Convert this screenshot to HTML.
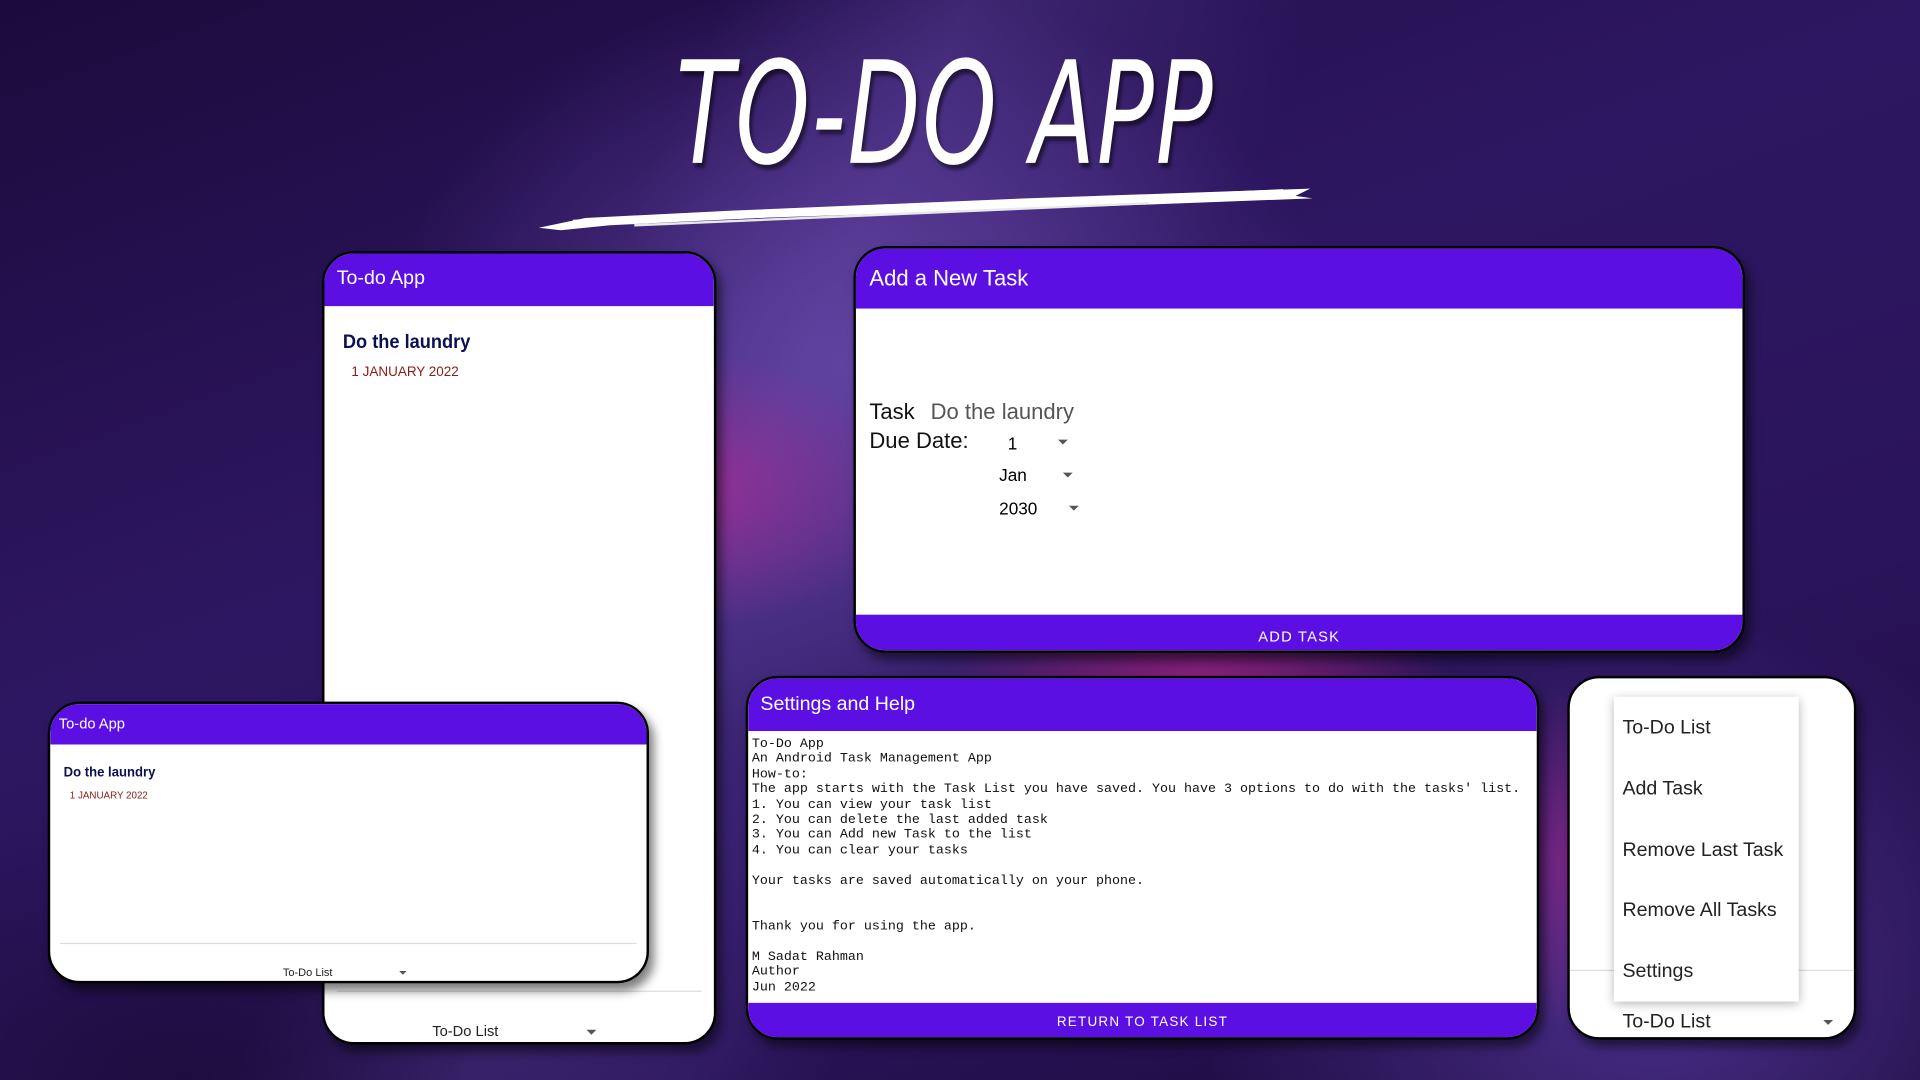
<!DOCTYPE html>
<html><head><meta charset="utf-8"><style>
*{margin:0;padding:0;box-sizing:border-box}
html,body{width:1920px;height:1080px;overflow:hidden;background:#1a0838}
#s{position:absolute;left:0;top:0;width:1568px;height:882px;transform:scale(1.22449);transform-origin:0 0;overflow:hidden;
background:
radial-gradient(ellipse 260px 160px at 560px 400px,rgba(200,40,150,.55),transparent 70%),
radial-gradient(ellipse 300px 120px at 980px 560px,rgba(210,40,140,.6),transparent 70%),
radial-gradient(ellipse 180px 200px at 1290px 700px,rgba(190,40,150,.45),transparent 70%),
linear-gradient(115deg,transparent 30%,rgba(110,80,180,.35) 40%,transparent 55%),
radial-gradient(ellipse 520px 420px at 700px 300px,#5a3c98,transparent 75%),
radial-gradient(ellipse 500px 400px at 1350px 800px,#4b2f8a,transparent 75%),
linear-gradient(160deg,#1c0a3c 0%,#2e1762 40%,#2a145a 70%,#1a0a3a 100%);
font-family:"Liberation Sans",sans-serif}
.card{position:absolute;background:#fff;border:2px solid #000;border-radius:26px;overflow:hidden;box-shadow:4px 6px 8px rgba(0,0,0,.5)}
.hd{background:#5b0fe3;color:#fff;position:absolute;left:0;right:0;top:0}
.bar{background:#5b0fe3;color:#fff;position:absolute;left:0;right:0;bottom:0;text-align:center;font-size:12px;letter-spacing:1px}
.mono{font-family:"Liberation Mono",monospace;font-size:10.9px;line-height:12.4px;color:#111;white-space:pre}
.tri{display:inline-block;width:0;height:0;border-left:4px solid transparent;border-right:4px solid transparent;border-top:4px solid #555}
</style></head><body><div id="s">
<div style="position:absolute;left:0;top:480px;width:800px;height:402px;background:radial-gradient(ellipse 500px 300px at 150px 402px,rgba(15,5,35,.5),transparent 80%)"></div>
<div style="position:absolute;left:438px;top:148px;width:636px;height:44px">
<svg width="636" height="44"><path d="M2 38 L40 30 L160 24 L400 14 L632 6 L620 12 L634 14 L420 22 L180 30 L60 36 L20 40 Z" fill="#fff"/><path d="M30 34 L610 9" stroke="#fff" stroke-width="5"/><path d="M80 36 L500 18" stroke="#e8e8e8" stroke-width="2"/></svg></div>
<div style="position:absolute;left:552px;top:26px;color:#fff;font-size:116px;font-style:italic;letter-spacing:2px;transform:scaleX(.74);transform-origin:left top;width:640px;text-shadow:3px 4px 3px rgba(0,0,0,.5);font-family:'DejaVu Sans Condensed','Liberation Sans',sans-serif">TO-DO APP</div>

<div class="card" style="left:263px;top:205px;width:322px;height:648px">
<div class="hd" style="height:43px;padding:12px 10px;font-size:16px">To-do App</div>
<div style="position:absolute;left:15px;top:64px;font-weight:bold;font-size:16px;color:#0a1050;transform:scaleX(.93);transform-origin:left">Do the laundry</div>
<div style="position:absolute;left:22px;top:91px;font-size:11px;color:#8b1a1a">1 JANUARY 2022</div>
<div style="position:absolute;left:10px;right:10px;top:602px;border-top:1px solid #ddd"></div>
<div style="position:absolute;left:88px;top:628px;font-size:12px;color:#222">To-Do List</div>
<div class="tri" style="position:absolute;left:214px;top:634px"></div>
</div>

<div class="card" style="left:39px;top:573px;width:491px;height:230px">
<div class="hd" style="height:33px;padding:9px 7px;font-size:12px">To-do App</div>
<div style="position:absolute;left:11px;top:50px;font-weight:bold;font-size:11.5px;color:#0a1050;transform:scaleX(.93);transform-origin:left">Do the laundry</div>
<div style="position:absolute;left:16px;top:70px;font-size:8px;color:#8b1a1a">1 JANUARY 2022</div>
<div style="position:absolute;left:8px;right:8px;top:195px;border-top:1px solid #ddd"></div>
<div style="position:absolute;left:190px;top:214px;font-size:9px;color:#222">To-Do List</div>
<div class="tri" style="position:absolute;left:285px;top:218px;border-width:3px 3px 0"></div>
</div>

<div class="card" style="left:697px;top:201px;width:728px;height:332px">
<div class="hd" style="height:49px;padding:14px 11px;font-size:18px">Add a New Task</div>
<div style="position:absolute;left:11px;top:123px;font-size:18px;color:#111">Task <span style="color:#555;margin-left:8px">Do the laundry</span></div>
<div style="position:absolute;left:11px;top:147px;font-size:18px;color:#111">Due Date:</div>
<div style="position:absolute;left:124px;top:151px;font-size:14px">1</div><div class="tri" style="position:absolute;left:165px;top:156px"></div>
<div style="position:absolute;left:117px;top:177px;font-size:14px">Jan</div><div class="tri" style="position:absolute;left:169px;top:183px"></div>
<div style="position:absolute;left:117px;top:204px;font-size:14px">2030</div><div class="tri" style="position:absolute;left:174px;top:210px"></div>
<div class="bar" style="height:29px;padding-top:11px;font-weight:500">ADD TASK</div>
</div>

<div class="card" style="left:609px;top:552px;width:648px;height:297px">
<div class="hd" style="height:43px;padding:13px 10px;font-size:16px">Settings and Help</div>
<div class="mono" style="position:absolute;left:3px;top:48px">To-Do App
An Android Task Management App
How-to:
The app starts with the Task List you have saved. You have 3 options to do with the tasks' list.
1. You can view your task list
2. You can delete the last added task
3. You can Add new Task to the list
4. You can clear your tasks

Your tasks are saved automatically on your phone.


Thank you for using the app.

M Sadat Rahman
Author
Jun 2022</div>
<div class="bar" style="height:28px;padding-top:10px;font-size:11px">RETURN TO TASK LIST</div>
</div>

<div class="card" style="left:1280px;top:552px;width:236px;height:297px">
<div style="position:absolute;left:0;right:0;top:238px;border-top:1px solid #ddd"></div>
<div style="position:absolute;left:43px;top:272px;font-size:16px;color:#222">To-Do List</div>
<div class="tri" style="position:absolute;left:207px;top:279px"></div>
<div style="position:absolute;left:36px;top:15px;width:151px;height:249px;background:#fff;box-shadow:0 2px 8px rgba(0,0,0,.3);font-size:16px;color:#222">
<div style="position:absolute;left:7px;top:17px">To-Do List</div>
<div style="position:absolute;left:7px;top:67px">Add Task</div>
<div style="position:absolute;left:7px;top:117px">Remove Last Task</div>
<div style="position:absolute;left:7px;top:166px">Remove All Tasks</div>
<div style="position:absolute;left:7px;top:216px">Settings</div>
</div>
</div>
</div></body></html>
